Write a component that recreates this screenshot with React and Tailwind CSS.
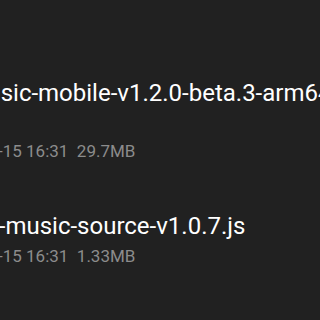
import React from 'react';

const files = [
  {
    name: 'lx-music-mobile-v1.2.0-beta.3-arm64-v8a.apk',
    date: '2024-03-15 16:31',
    size: '29.7MB',
    shift: 'ml-[-58px]',
  },
  {
    name: 'lx-music-source-v1.0.7.js',
    date: '2024-03-15 16:31',
    size: '1.33MB',
    shift: 'ml-[-19px]',
  },
];

export default function App() {
  return (
    <div
      className="w-[320px] h-[320px] overflow-hidden bg-[#212121] text-white"
      style={{ fontFamily: 'Roboto, "Noto Sans", sans-serif' }}
    >
      <div className="pt-[77px] flex flex-col">
        <div className="h-[133px]">
          <div className={`whitespace-nowrap text-[24px] leading-[32px] ${files[0].shift}`}>{files[0].name}</div>
          <div className="mt-[30px] whitespace-nowrap text-[17px] leading-[24px] text-[#8c8c8c] ml-[-64px]">
            {files[0].date}&nbsp;&nbsp;{files[0].size}
          </div>
        </div>
        <div>
          <div className={`whitespace-nowrap text-[24px] leading-[32px] ${files[1].shift}`}>{files[1].name}</div>
          <div className="mt-[2px] whitespace-nowrap text-[17px] leading-[24px] text-[#8c8c8c] ml-[-64px]">
            {files[1].date}&nbsp;&nbsp;{files[1].size}
          </div>
        </div>
      </div>
    </div>
  );
}
